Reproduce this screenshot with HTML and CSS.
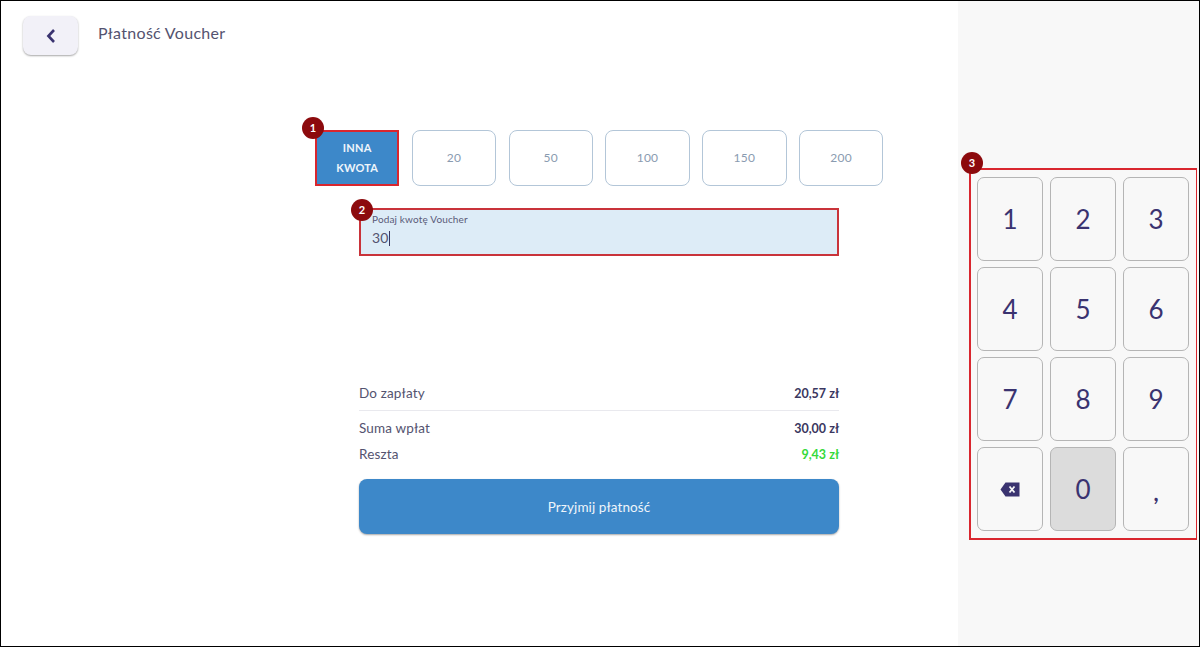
FILE: index.html
```html
<!DOCTYPE html>
<html lang="pl">
<head>
<meta charset="utf-8">
<title>Płatność Voucher</title>
<link rel="stylesheet" href="styles.css">
</head>
<body>
<div class="frame">
  <main class="main">
    <header class="topbar">
      <button class="back" aria-label="Wstecz">
        <svg width="12" height="16" viewBox="0 0 12 16"><path d="M9 2 L3.4 8 L9 14" fill="none" stroke="#3a3370" stroke-width="2.6"/></svg>
      </button>
      <h1 class="title">Płatność Voucher</h1>
    </header>
    <div class="amounts">
      <button class="amount active">
        <span class="marker marker-1">1</span>
        INNA<br>KWOTA
      </button>
      <button class="amount">20</button>
      <button class="amount">50</button>
      <button class="amount">100</button>
      <button class="amount">150</button>
      <button class="amount">200</button>
    </div>
    <div class="column">
      <div class="field">
        <span class="marker marker-2">2</span>
        <div class="field-label">Podaj kwotę Voucher</div>
        <div class="field-value">30<span class="caret"></span></div>
      </div>
      <div class="row first"><span>Do zapłaty</span><b>20,57 zł</b></div>
      <div class="rule"></div>
      <div class="row second"><span>Suma wpłat</span><b>30,00 zł</b></div>
      <div class="row third"><span>Reszta</span><b class="green">9,43 zł</b></div>
      <button class="submit">Przyjmij płatność</button>
    </div>
  </main>
  <aside class="side">
    <div class="keypad">
      <span class="marker marker-3">3</span>
      <button class="key">1</button>
      <button class="key">2</button>
      <button class="key">3</button>
      <button class="key">4</button>
      <button class="key">5</button>
      <button class="key">6</button>
      <button class="key">7</button>
      <button class="key">8</button>
      <button class="key">9</button>
      <button class="key" aria-label="Usuń">
        <svg width="20" height="15" viewBox="0 0 20 15"><path d="M5.5 0.5 H19.5 V14.5 H5.5 L0.5 7.5 Z" fill="#3a3370"/><path d="M9.5 4.5 L14.5 10.5 M14.5 4.5 L9.5 10.5" stroke="#f8f8f8" stroke-width="1.8"/></svg>
      </button>
      <button class="key pressed">0</button>
      <button class="key comma">,</button>
    </div>
  </aside>
</div>
</body>
</html>
```
FILE: styles.css
```css
* { box-sizing: border-box; }
html, body { margin: 0; padding: 0; height: 100%; }
body { font-family: "Lato", "Noto Sans", sans-serif; color: #3a3760; background: #fff; overflow: hidden; }
button { font-family: inherit; padding: 0; cursor: pointer; }
.frame { width: 1200px; height: 647px; display: flex; border: 1px solid #000; background: #fff; }
.main { width: 957px; flex: none; display: flex; flex-direction: column; }
.topbar { display: flex; align-items: flex-start; gap: 20px; padding: 15px 0 0 22px; height: 129px; }
.back { width: 55px; height: 39px; border: 0; border-radius: 8px; background: #f2f1f8; box-shadow: 0 1px 2px rgba(0,0,0,.35); display: flex; align-items: center; justify-content: center; }
.title { margin: 7px 0 0; font-size: 16px; font-weight: 400; color: #54536f; letter-spacing: .3px; }
.amounts { display: flex; gap: 12.4px; padding-left: 314px; height: 57px; }
.amount { position: relative; width: 84.4px; height: 56px; border: 1px solid #b3c6d8; border-radius: 8px; background: #fff; color: #8a9bb0; font-size: 12px; line-height: 20px; letter-spacing: .2px; }
.amount.active { background: #3d88c9; border: 2px solid #d9262e; border-radius: 0; color: #eef5fb; font-size: 11px; font-weight: 700; }
.marker { position: absolute; width: 22px; height: 22px; border-radius: 50%; background: #8c0a0d; color: #fff; font-size: 11px; font-weight: 700; line-height: 22px; text-align: center; letter-spacing: 0; }
.marker-1 { left: -15px; top: -15px; }
.marker-2 { left: -10px; top: -11px; }
.marker-3 { left: -10px; top: -18px; }
.column { width: 480px; margin: 21px 0 0 358px; display: flex; flex-direction: column; }
.field { position: relative; height: 48px; background: #ddecf7; border: 2px solid #c9333a; padding: 3px 11px; }
.field-label { font-size: 10px; line-height: 12px; color: #5a5a78; letter-spacing: .15px; }
.field-value { font-size: 14px; line-height: 18px; margin-top: 4px; color: #54536f; display: flex; align-items: center; letter-spacing: .2px; }
.caret { display: inline-block; width: 1px; height: 15px; background: #3a3760; }
.row { display: flex; justify-content: space-between; align-items: center; font-size: 13.5px; color: #54536f; height: 20px; letter-spacing: .15px; }
.row b { font-size: 12.5px; font-weight: 700; color: #3a3760; letter-spacing: 0; }
.row b.green { color: #35d93a; }
.row.first { margin-top: 127px; }
.rule { height: 1px; background: #e9e9ee; margin-top: 7px; }
.row.second { margin-top: 7px; }
.row.third { margin-top: 6px; }
.submit { margin-top: 15px; height: 55px; border: 0; border-radius: 8px; background: #3d88c9; color: #eef5fb; font-size: 13.5px; letter-spacing: .1px; box-shadow: 0 1px 2px rgba(0,0,0,.35); }
.side { flex: 1; background: #f8f8f8; padding: 167px 0 0 11px; }
.keypad { position: relative; width: 228px; height: 372px; border: 2px solid #d9262e; border-right-width: 1px; padding: 7px 6px; display: grid; grid-template-columns: repeat(3, 66px); grid-template-rows: repeat(4, 84px); gap: 6px 7px; }
.key { border: 1px solid #b5b5b5; border-radius: 7px; background: #f8f8f8; color: #3a3370; font-size: 26px; display: flex; align-items: center; justify-content: center; }
.key.pressed { background: #dcdcdc; }
.key.comma { padding-top: 6px; font-weight: 700; font-size: 22px; }
```
